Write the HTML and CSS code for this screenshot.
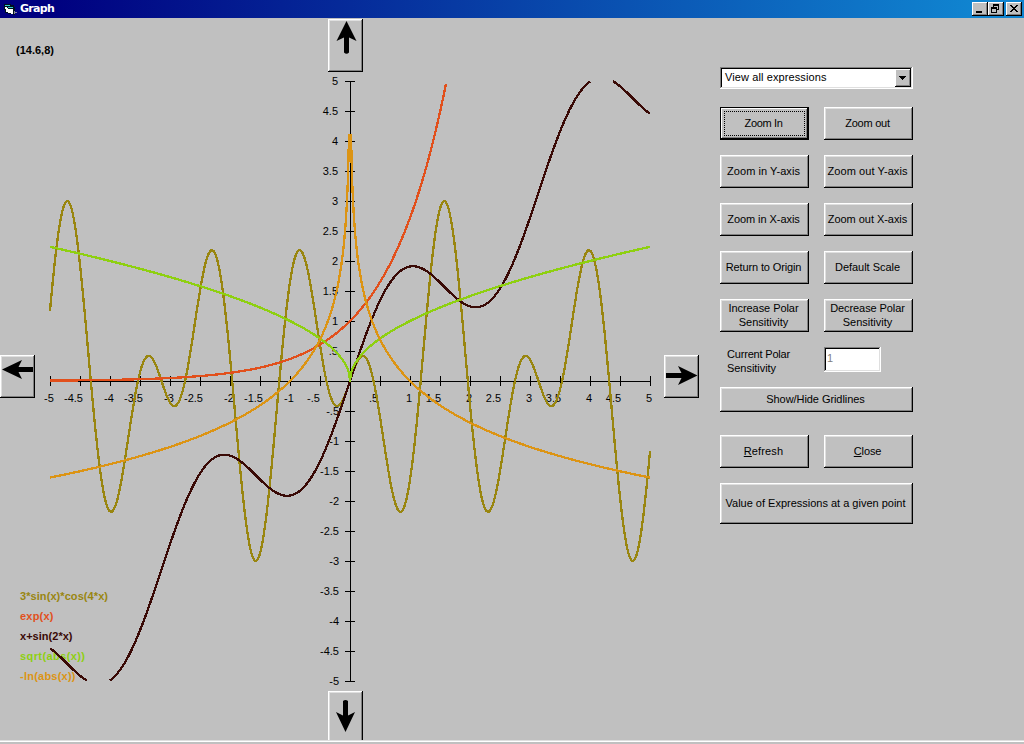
FILE: index.html
```html
<!DOCTYPE html>
<html lang="en">
<head>
<meta charset="utf-8">
<title>Graph</title>
<link rel="stylesheet" href="styles.css">
</head>
<body>
<header class="titlebar">
  <svg class="app-icon" width="14" height="12" viewBox="0 0 14 12" shape-rendering="crispEdges">
    <path d="M0 0h7v1h3v2h1v8H9v-1H4V9H1V6H0z" fill="#012"/>
    <path d="M1 1h5v1H1zM4 3h5v1H4z" fill="#3cc"/>
    <path d="M1 3h2v1h1v1h5v5H7V9H4V8H2V5H1z" fill="#fff"/>
    <path d="M10 7h1v1h2v1h-2v1h-1z" fill="#889"/>
  </svg>
  <span class="title" data-width="34">Graph</span>
  <div class="window-buttons">
    <button class="win-btn"><svg width="16" height="14" shape-rendering="crispEdges"><path d="M4 9h6v2H4z"/></svg></button>
    <button class="win-btn"><svg width="16" height="14" shape-rendering="crispEdges"><path d="M5 2h6v6H9V7h1V4H6v1H5zM3 5h6v6H3zM4 7v3h4V7z" fill-rule="evenodd"/></svg></button>
    <button class="win-btn close"><svg width="16" height="14" shape-rendering="crispEdges"><path d="M4 3h2v1h1v1h2V4h1V3h2v1h-1v1h-1v1H9v1h1v1h1v1h1v1h-2V9H9V8H7v1H6v1H4V9h1V8h1V7h1V6H6V5H5V4H4z"/></svg></button>
  </div>
</header>
<main class="workspace">
  <section class="graph">
    <div class="coords"><span data-width="38">(14.6,8)</span></div>
    <button class="pan up"><svg width="35" height="53"><path d="M18.5 2L28.5 22L21 18.5V33.5Q18.5 36 16 33.5V18.5L8.500 22z"/></svg></button>
    <button class="pan left"><svg width="35" height="43"><path d="M2 14.500L22 5L18.500 12H33V17H18.500L22 24z"/></svg></button>
    <svg class="plot" width="629" height="619" viewBox="35 72 629 619">
      <g id="labels"></g>
      <g class="legend">
        <text x="20" y="600" textLength="88" fill="#998610">3*sin(x)*cos(4*x)</text>
        <text x="20" y="620" textLength="33.500" fill="#e2501c">exp(x)</text>
        <text x="20" y="640" textLength="52.500" fill="#3a0a06">x+sin(2*x)</text>
        <text x="20" y="660" textLength="65" fill="#8ed010">sqrt(abs(x))</text>
        <text x="20" y="680" textLength="55.500" fill="#dc9414">-ln(abs(x))</text>
      </g>
      <path id="axes" class="axes"/>
      <g id="curves" class="curves"></g>
    </svg>
    <button class="pan right"><svg width="35" height="43"><path d="M2 18H17.500L14 11L33.500 20.500L14 30L17.500 23H2z"/></svg></button>
    <button class="pan down"><svg width="35" height="49"><path d="M17.500 41L8 21L15 24.500V10Q17.500 8 20 10V24.500L27 21z"/></svg></button>
  </section>
  <aside class="controls">
    <div class="combo"><span data-width="101.5">View all expressions</span>
      <button class="drop"><svg width="16" height="18" shape-rendering="crispEdges"><path d="M4 7h7v1h-1v1H9v1H8v1H7v-1H6V9H5V8H4z"/></svg></button>
    </div>
    <div class="button-grid">
      <button class="btn focused"><span data-width="38">Zoom In</span></button>
      <button class="btn"><span data-width="44.500">Zoom out</span></button>
      <button class="btn"><span data-width="73">Zoom in Y-axis</span></button>
      <button class="btn"><span data-width="80">Zoom out Y-axis</span></button>
      <button class="btn"><span data-width="72.500">Zoom in X-axis</span></button>
      <button class="btn"><span data-width="79.500">Zoom out X-axis</span></button>
      <button class="btn"><span data-width="75.500">Return to Origin</span></button>
      <button class="btn"><span data-width="65">Default Scale</span></button>
      <button class="btn"><span data-width="70">Increase Polar</span><span data-width="49.500">Sensitivity</span></button>
      <button class="btn"><span data-width="74.500">Decrease Polar</span><span data-width="49.500">Sensitivity</span></button>
    </div>
    <div class="sensitivity">
      <div class="field-label"><span data-width="63">Current Polar</span><span data-width="49">Sensitivity</span></div>
      <div class="field">1</div>
    </div>
    <button class="btn gridlines"><span data-width="98.500">Show/Hide Gridlines</span></button>
    <div class="button-grid actions">
      <button class="btn"><span data-width="39.500"><u>R</u>efresh</span></button>
      <button class="btn"><span data-width="27.500"><u>C</u>lose</span></button>
    </div>
    <button class="btn value"><span data-width="180">Value of Expressions at a given point</span></button>
  </aside>
</main>
<footer class="bottom-edge"></footer>
<script src="graph.js"></script>
</body>
</html>
```
FILE: styles.css
```css
* { box-sizing: border-box; }
body {
  margin: 0;
  width: 1024px;
  height: 744px;
  overflow: hidden;
  display: flex;
  flex-direction: column;
  background: #c0c0c0;
  color: #000;
  font: 11px/14px "Liberation Sans", Arial, sans-serif;
}
svg { display: block; }
button { font: inherit; color: inherit; padding: 0; margin: 0; background: #c0c0c0; border: 0; border-radius: 0; }
span { white-space: nowrap; }

.titlebar {
  flex: none;
  height: 18px;
  display: flex;
  align-items: center;
  padding: 0 2px 0 4px;
  background: linear-gradient(90deg, #000080 5%, #1084d0 95%);
}
.app-icon { margin-top: 1px; }
.title { margin-left: 2px; color: #fff; font: bold 11px/16px "DejaVu Sans", sans-serif; }
.window-buttons { display: flex; margin-left: auto; }
.win-btn, .drop {
  width: 16px;
  height: 14px;
  box-shadow: inset -1px -1px #000, inset 1px 1px #fff, inset -2px -2px #808080;
}
.win-btn.close { margin-left: 2px; }

.workspace { flex: none; height: 722px; display: flex; }
.graph {
  width: 699px;
  display: grid;
  grid-template-columns: 35px 629px 35px;
  grid-template-rows: 54px 619px 49px;
}
.coords { grid-area: 1 / 1; padding: 25px 0 0 16px; font-weight: bold; }
.pan, .btn {
  overflow: hidden;
  box-shadow: inset -1px -1px #000, inset 1px 1px #fff, inset -2px -2px #808080, inset 2px 2px #dfdfdf;
}
.pan { width: 35px; height: 43px; }
.up { grid-area: 1 / 2; height: 53px; margin: 1px 0 0 293px; }
.left { grid-area: 2 / 1; margin-top: 283px; }
.plot { grid-area: 2 / 2; overflow: visible; }
.right { grid-area: 2 / 3; margin-top: 283px; }
.down {
  grid-area: 3 / 2;
  height: 49px;
  margin-left: 293px;
  box-shadow: inset -1px 0 #000, inset 1px 1px #fff, inset -2px 0 #808080, inset 2px 2px #dfdfdf;
}
.legend { font-weight: bold; }
.axes { stroke: #000; fill: none; shape-rendering: crispEdges; }
.curves { fill: none; stroke-width: 2.3; stroke-linejoin: round; shape-rendering: crispEdges; }

.controls { width: 193px; margin-left: 21px; padding-top: 49px; }
.combo {
  display: flex;
  height: 22px;
  padding: 2px;
  background: #fff;
  box-shadow: inset -1px -1px #fff, inset 1px 1px #808080, inset -2px -2px #dfdfdf, inset 2px 2px #000;
}
.combo span { margin: 1px 0 0 3px; }
.drop { height: 18px; margin-left: auto; }
.button-grid {
  display: grid;
  grid-template-columns: 89px 89px;
  grid-auto-rows: 33px;
  gap: 15px;
  margin-top: 18px;
}
.btn { display: flex; flex-direction: column; align-items: center; justify-content: center; padding: 0 2px 1px 0; }
.btn.focused {
  outline: 1px dotted #000;
  outline-offset: -5px;
  box-shadow: inset 0 0 0 1px #000, inset -2px -2px #000, inset 2px 2px #fff, inset -3px -3px #808080;
}
.sensitivity { display: flex; margin-top: 15px; height: 25px; }
.field-label { width: 104px; padding-left: 7px; display: flex; flex-direction: column; align-items: flex-start; }
.field {
  width: 57px;
  height: 25px;
  padding: 4px 0 0 3px;
  color: #808080;
  background: #fff;
  box-shadow: inset -1px -1px #fff, inset 1px 1px #808080, inset -2px -2px #dfdfdf, inset 2px 2px #000;
}
.gridlines { width: 193px; height: 25px; margin-top: 15px; }
.actions { margin-top: 23px; }
.value { width: 193px; height: 41px; margin-top: 15px; }
.bottom-edge { flex: none; height: 4px; border-top: 1px solid #dfdfdf; box-shadow: inset 0 1px #fff; }
```
FILE: graph.js
```js
const NS = 'http://www.w3.org/2000/svg';
const OX = 350, OY = 381, SCALE = 60;

document.querySelectorAll('[data-width]').forEach(el => {
  const natural = el.getBoundingClientRect().width;
  el.style.letterSpacing = (el.dataset.width - natural) / el.textContent.length + 'px';
});

// Axes, ticks and tick labels.
let d = `M50 ${OY}.5H651M${OX}.5 81V682`;
const labels = document.getElementById('labels');
function label(text, x, y, anchor) {
  const t = document.createElementNS(NS, 'text');
  t.setAttribute('x', x);
  t.setAttribute('y', y);
  t.setAttribute('text-anchor', anchor);
  t.textContent = text;
  labels.append(t);
}
for (let v = -5; v <= 5; v += 0.5) {
  const x = OX + v * SCALE, y = OY - v * SCALE;
  d += `M${x + 0.5} 376V386M345 ${y + 0.5}H355`;
  if (v === 0) continue;
  const text = String(v).replace('0.', '.');
  label(text, x - (v % 1 ? 6.5 : 1), 402, 'middle');
  label(text, v < 0 ? 339 : 338, y + 4, 'end');
}
document.getElementById('axes').setAttribute('d', d);

// Expressions, sampled once per pixel column; points out of range break the line.
const expressions = [
  ['#998610', x => 3 * Math.sin(x) * Math.cos(4 * x)],
  ['#e2501c', x => Math.exp(x)],
  ['#3a0a06', x => x + Math.sin(2 * x)],
  ['#8ed010', x => Math.sqrt(Math.abs(x))],
  ['#dc9414', x => -Math.log(Math.abs(x) || 1 / SCALE)]
];
for (const [color, f] of expressions) {
  let path = '', pen = 'M';
  for (let i = -300; i <= 300; i++) {
    const y = f(i / SCALE);
    if (Math.abs(y) > 5) { pen = 'M'; continue; }
    path += `${pen}${OX + i} ${(OY - y * SCALE).toFixed(2)}`;
    pen = 'L';
  }
  const p = document.createElementNS(NS, 'path');
  p.setAttribute('d', path);
  p.setAttribute('stroke', color);
  document.getElementById('curves').append(p);
}
```
